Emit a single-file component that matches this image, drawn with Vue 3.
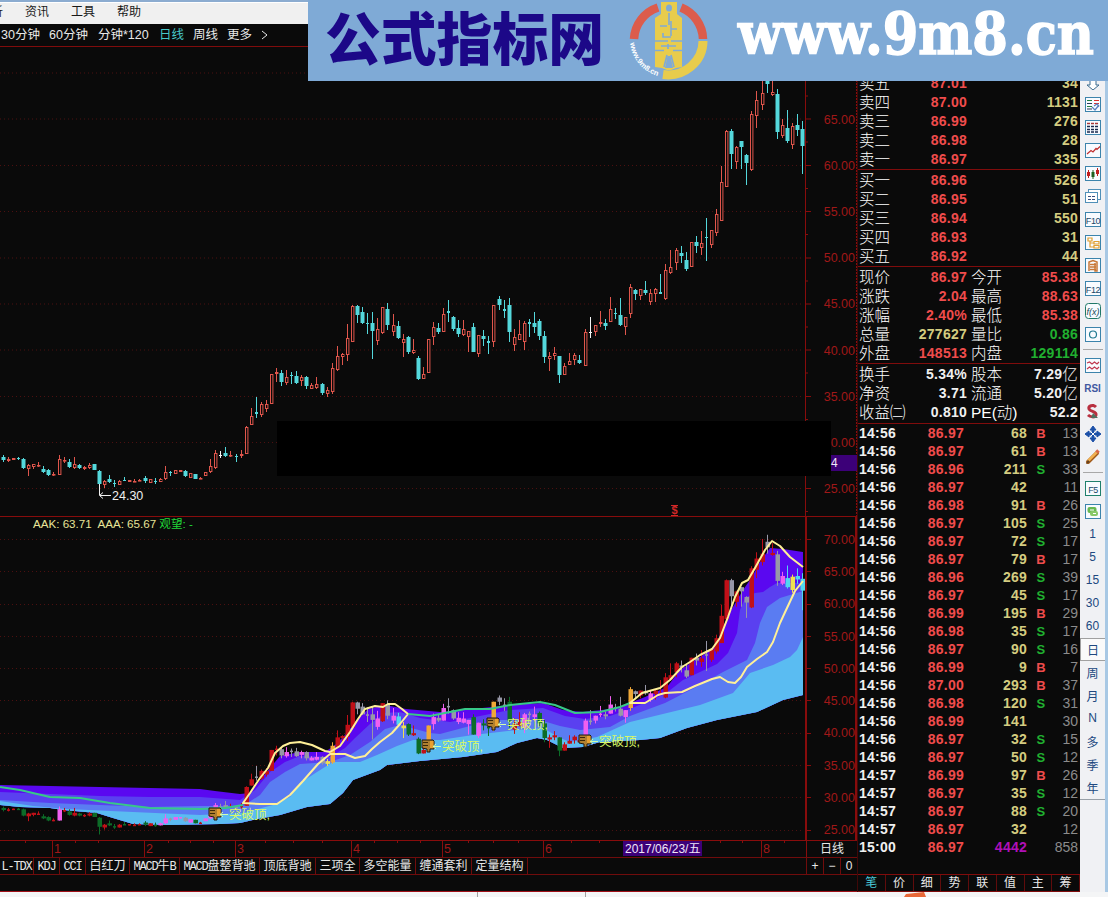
<template>
  <div class="terminal">
    <div class="main-area">
      <div class="menu-bar">
        <span class="menu-cut">析</span>
        <span class="menu-item">资讯</span>
        <span class="menu-item">工具</span>
        <span class="menu-item">帮助</span>
      </div>
      <div class="period-bar">
        <span v-for="p in periods" :key="p.name" :style="{ width: p.w + 'px' }" :class="{ active: p.name === '日线' }">{{ p.name }}</span>
        <svg width="8" height="10" viewBox="0 0 8 10"><path d="M1 1L6 5L1 9" fill="none" stroke="#e8e8e8" /></svg>
      </div>

      <svg class="pane price-pane" width="857" height="469" viewBox="0 47 857 469">
        <g class="grid">
          <line v-for="y in priceGrid" :key="y" x1="0" x2="803" :y1="y" :y2="y" />
        </g>
        <path class="axis" d="M805.5 47V516" />
        <path class="axis dotted" d="M856.5 47V516" />
        <path v-for="y in priceGrid" :key="'t' + y" class="axis" :d="`M806 ${y}h5M806 ${y + 23}h2`" />
        <text v-for="(t, i) in priceLabels" :key="t" class="axis-label" x="855" :y="123.5 + i * 46.2">{{ t }}</text>
        <g v-for="c in candles" :key="c.x">
          <path :d="`M${c.x + 0.5} ${c.hi}V${c.top}M${c.x + 0.5} ${c.bot}V${c.lo}`" :stroke="c.color" />
          <rect v-if="c.kind === 'r'" :x="c.x - 0.5" :y="c.top + 0.5" width="2.4" :height="Math.max(c.bot - c.top - 1, 0.6)" fill="#0a0a0a" :stroke="c.color" />
          <rect v-else :x="c.x - (c.bot - c.top > 2 ? 1.5 : 1)" :y="c.top" :width="c.bot - c.top > 2 ? 4 : 3" :height="Math.max(c.bot - c.top, 1)" :fill="c.color" />
        </g>
        <path d="M99.5 484V495M100 495.5H111M103 492.5L99.5 495.5L103 498.5" fill="none" stroke="#f0f0f0" />
        <text class="low-text" x="112" y="500">24.30</text>
        <rect x="277" y="421" width="554" height="55" fill="#000" />
        <rect x="831" y="455" width="26" height="16" fill="#3c0078" />
        <text x="831" y="467" class="cursor-price">4</text>
        <text x="671.5" y="514" class="dollar">$</text>
        <path d="M671 505.5H678M671 515.5H678" stroke="#d02828" />
      </svg>

      <svg class="pane signal-pane" width="857" height="324" viewBox="0 516 857 324">
        <g class="grid">
          <line v-for="y in signalGrid" :key="y" x1="0" x2="803" :y1="y" :y2="y" />
        </g>
        <polygon v-for="b in bands" :key="b.fill" :points="b.points" :fill="b.fill" />
        <g v-for="c in signals" :key="c.x">
          <path :d="`M${c.x + 0.5} ${c.hi}V${c.lo}`" :stroke="c.color" />
          <rect :x="c.x - (c.h > 2 ? 1.5 : 1)" :y="c.top" :width="c.h > 2 ? 4.5 : 3" :height="c.h" :fill="c.color" />
        </g>
        <polyline v-for="(l, i) in greenLines" :key="'g' + i" :points="l" class="line green" />
        <polyline v-for="(l, i) in yellowLines" :key="'y' + i" :points="l" class="line yellow" />
        <g v-for="m in marks" :key="m.x" :transform="`translate(${m.x} ${m.y})`">
          <path d="M-6 -5H5L6 -4V4H2V7H-1V4L-6 3Z" fill="#b08030" stroke="#20180c" />
          <path d="M-5 -2.5H0M-5 0.5H0" stroke="#3c2808" />
          <rect x="2" y="-4" width="3.5" height="7" fill="#e8a030" />
          <path d="M5 1.5H13M5 1.5L8 -1M5 1.5L8 4" stroke="#d0ffb0" fill="none" />
          <text x="14" y="5.5" class="mark-text">突破顶,</text>
        </g>
        <path class="axis wide" d="M806 516V840" />
        <path class="axis wide" d="M0 516H857" />
        <path class="axis wide" d="M856 516V840" />
        <path v-for="y in signalGrid" :key="'s' + y" class="axis" :d="`M807 ${y}h4`" />
        <text v-for="(t, i) in signalLabels" :key="t" class="axis-label" x="855" :y="543.8 + i * 32.28">{{ t }}</text>
        <text class="legend" x="33" y="528">AAK: 63.71&nbsp; AAA: 65.67 <tspan class="wait">观望: -</tspan></text>
      </svg>

      <div class="time-row">
        <svg width="806" height="17" viewBox="0 840 806 17">
          <path class="axis" d="M0 840.5H806" />
          <g v-for="m in months" :key="m.label">
            <path class="axis" :d="`M${m.x - 0.5} 840V857`" />
            <text class="month" :x="m.x + 1" y="853">{{ m.label }}</text>
          </g>
          <path class="axis" d="M25.5 840v3M75.5 840v3M98.5 840v3M168.5 840v3M190.5 840v3M213.5 840v3M265.5 840v3M293.5 840v3M322.5 840v3M374.5 840v3M397.5 840v3M420.5 840v3M468.5 840v3M493.5 840v3M518.5 840v3M571.5 840v3M599.5 840v3M720.5 840v3M742.5 840v3M784.5 840v3" />
          <rect x="623" y="841" width="79" height="15" fill="#3c0078" />
          <text class="date" x="625" y="853">2017/06/23/五</text>
        </svg>
        <div class="time-unit">日线</div>
      </div>

      <div class="tabs-row">
        <div class="tabs">
          <span v-for="t in tabs" :key="t.w + t.a + t.b" class="tab" :style="{ width: t.w + 'px' }"><i>{{ t.a }}</i>{{ t.b }}<i>{{ t.c }}</i></span>
        </div>
        <div class="zoomers"><span>+</span><span>−</span><span>0</span></div>
      </div>
      <div class="blank-row"></div>
    </div>

    <div class="quote">
      <div class="rows asks">
        <div v-for="r in asks" :key="r[0]" class="row"><label>{{ r[0] }}</label><b class="price red">{{ r[1] }}</b><b class="vol yel">{{ r[2] }}</b></div>
      </div>
      <div class="rows bids">
        <div v-for="r in bids" :key="r[0]" class="row"><label>{{ r[0] }}</label><b class="price red">{{ r[1] }}</b><b class="vol yel">{{ r[2] }}</b></div>
      </div>
      <div class="rows stats">
        <div v-for="r in stats" :key="r[0]" class="row">
          <label>{{ r[0] }}</label><b class="price" :class="r[2]">{{ r[1] }}</b>
          <label class="second">{{ r[3] }}</label><b class="vol" :class="r[5]">{{ r[4] }}</b>
        </div>
      </div>
      <div class="rows funds">
        <div v-for="r in funds" :key="r[0]" class="row">
          <label>{{ r[0] }}</label><b class="price wht">{{ r[1] }}</b>
          <label class="second">{{ r[2] }}</label><b class="vol wht">{{ r[3] }}<em v-if="r[4]">{{ r[4] }}</em></b>
        </div>
      </div>
      <div class="ticks">
        <div v-for="(t, i) in ticks" :key="i" class="tick">
          <b class="time wht">{{ t[0] }}</b>
          <b class="tprice red">{{ t[1] }}</b>
          <b class="tvol" :class="i === ticks.length - 1 ? 'mag' : 'yel'">{{ t[2] }}</b>
          <b class="side" :class="t[3] === 'B' ? 'red' : 'grn'">{{ t[3] }}</b>
          <span class="count">{{ t[4] }}</span>
        </div>
      </div>
      <div class="quote-tabs">
        <span v-for="(t, i) in quoteTabs" :key="t" :class="{ active: i === 0 }">{{ t }}</span>
      </div>
    </div>

    <div class="tool-bar">
      <div v-for="(t, i) in tools" :key="i" class="tool" :class="{ gap: t === '|', text: !isIcon(t) && t !== '|', on: t === '日' }">
        <svg v-if="isIcon(t)" width="18" height="18" viewBox="0 0 18 18" fill="none">
          <template v-if="t === '@down'">
            <path d="M6 4V13H3L9 18L15 13H12V4" fill="#fff" stroke="#3c6c90" />
          </template>
          <template v-else-if="t === '@move'">
            <path d="M9 1L12 5H10V8H13V6L17 9L13 12V10H10V13H12L9 17L6 13H8V10H5V12L1 9L5 6V8H8V5H6Z" fill="#1c50a8" stroke="#1c50a8" />
            <path d="M7 7L11 11M11 7L7 11" stroke="#fff" />
          </template>
          <template v-else-if="t === '@pen'">
            <path d="M4 14L13 5" stroke="#a05818" stroke-width="4" stroke-linecap="round" />
            <path d="M4 13L13 4" stroke="#f0b050" stroke-width="2.5" />
            <path d="M12.5 4.5L14.5 2.5" stroke="#d86848" stroke-width="3.5" />
            <path d="M2 16L4 12L6 14Z" fill="#604020" />
          </template>
          <template v-else-if="t === '@s'">
            <path d="M12 5C9 2 4 4 5 7C6 10 13 9 12 13C11 16 6 15 4 13" stroke="#b83040" stroke-width="3" />
            <path d="M9 2V4" stroke="#b83040" stroke-width="2" />
            <path d="M9 11L14 16H7" fill="#507060" />
          </template>
          <template v-else>
            <rect v-if="t !== '@pages' && t !== '@fx'" x="1.5" y="2.5" width="15" height="14" fill="#f8fbff" :stroke="t === '@F5' ? '#20806c' : '#3c84ac'" />
            <template v-if="t === '@news'">
              <path d="M3 5.5H8M3 11.5H8" stroke="#208040" /><path d="M3 8.5H8M3 14H8" stroke="#283858" /><path d="M10 5.5H15M10 8.5H15" stroke="#d83030" />
              <path d="M8 12L11 15L15 10M10 11L13 9L15 12" stroke="#5880c0" stroke-width="1.3" />
            </template>
            <template v-if="t === '@list'">
              <path d="M3 5.5H15" stroke="#a83838" stroke-width="1.5" stroke-dasharray="3 1" /><path d="M3 8.5H15M3 11.5H15M3 14H15" stroke="#18284c" stroke-width="1.5" stroke-dasharray="3 1" />
            </template>
            <path v-if="t === '@trend'" d="M3 13L7 9.5L9 11L12 7.5L13 8.5L16 5.5" stroke="#c03030" stroke-width="1.2" />
            <template v-if="t === '@kline'">
              <path d="M4.5 6V14M13.5 4V12" stroke="#c02020" /><path d="M4.5 8V12M13.5 6V10" stroke="#c02020" stroke-width="3" /><path d="M9 6V15" stroke="#206020" /><path d="M9 8V13" stroke="#206020" stroke-width="3" />
            </template>
            <template v-if="t === '@pages'">
              <rect x="4.5" y="2.5" width="12" height="10" fill="#fff" stroke="#5090b8" /><rect x="1.5" y="5.5" width="12" height="10" fill="#fff" stroke="#5090b8" /><path d="M4 9.5H12M4 12.5H12" stroke="#385080" stroke-dasharray="3 1" />
            </template>
            <path v-if="t === '@tree'" d="M4 5H8V8H4ZM6 8V14H10M6 10H10M10 8.5H15V11H10ZM10 12.5H15V15H10Z" stroke="#e0a030" stroke-width="1.2" />
            <path v-if="t === '@note'" d="M5 15V6L9 4.5L13 6V15H11V7M6 8.5H12M6 11H12M6 13.5H12" stroke="#c87838" stroke-width="1.5" />
            <template v-if="t === '@fx'">
              <rect x="1.5" y="1.5" width="15" height="15" rx="3" fill="#f8fbff" stroke="#207868" />
              <text x="9" y="12.5" class="fx">f(x)</text>
            </template>
            <circle v-if="t === '@ring'" cx="9" cy="9.5" r="3.5" stroke="#207890" stroke-width="1.2" />
            <path v-if="t === '@wave'" d="M3 7L5.5 6L8 8L10.5 6L13 8L15 6M3 13L5.5 11L8 13L10.5 11L13 13L15 11" stroke="#c03850" stroke-width="1.2" />
            <template v-if="t === '@phone'">
              <rect x="3.5" y="5" width="9" height="6" rx="2" fill="#68b850" /><rect x="6" y="9" width="8" height="5" rx="2" fill="#88c868" /><path d="M6 8H10M9 11.5H12" stroke="#fff" />
            </template>
            <text v-if="t[1] === 'F'" x="9" y="13.5" class="f-key">{{ t.slice(1) }}</text>
          </template>
        </svg>
        <span v-else-if="t !== '|'" :class="{ rsi: t === 'RSI' }">{{ t }}</span>
      </div>
      <div class="tool-rest"></div>
    </div>

    <div class="status-strip">
      <i></i><i></i>
      <svg width="26" height="5" viewBox="0 0 26 5"><path d="M2 5L4 2L22 0L24 5Z" fill="#e86838" /></svg>
    </div>

    <div class="banner">
      <svg width="800" height="81" viewBox="308 0 800 81">
        <text class="site-name" x="325" y="60" textLength="279" lengthAdjust="spacingAndGlyphs">公式指标网</text>
        <path d="M634 39A35 35 0 0 1 658 7.5M681 7.5A35 35 0 0 1 703 39" fill="none" stroke="#dc5c4c" stroke-width="8.5" />
        <path d="M703 41A35 34 0 0 1 663 74.5" fill="none" stroke="#e8cc4c" stroke-width="9" />
        <path d="M661 2H677V14L682 18V67L676 68L671 70H667L662 68L655 67V18L661 14Z" fill="#e8cc4c" />
        <ellipse cx="669" cy="8" rx="3" ry="3.5" fill="#7faad6" />
        <path d="M669 13V25M660 26H667M671 21V36M671 29H677M663 33V37H671M655 41H668M671 41H682M668 44V49M655 50.5H664M673 50.5H682M661 46H676M667 55L664 67M671 55L674 67" fill="none" stroke="#7faad6" stroke-width="1.6" />
        <path d="M667.5 56H670.5L673 68H665Z" fill="#7faad6" />
        <path id="logo-arc" d="M630 43A39 39 0 0 0 662 77" fill="none" />
        <text class="logo-url"><textPath href="#logo-arc">www.9m8.cn</textPath></text>
        <text class="site-url" x="738" y="54" textLength="356" lengthAdjust="spacingAndGlyphs">www.9m8.cn</text>
      </svg>
    </div>
  </div>
</template>

<script setup>
const periods = [
  { name: '30分钟', w: 48 },
  { name: '60分钟', w: 49 },
  { name: '分钟*120', w: 61 },
  { name: '日线', w: 34 },
  { name: '周线', w: 34 },
  { name: '更多', w: 34 }
]

// x, 最高, 实体上沿, 实体下沿, 最低, 主图颜色, 副图颜色
const raw = `3 455 457 460 462 c g
8 457 459 461 462 r d
13 458 458 460 460 r d
18 457 458 459 460 c g
23 458 459 468 469 c g
28 464 465 469 476 r d
33 464 464 467 469 r d
38 462 465 466 467 r d
43 466 469 472 473 c g
48 469 470 475 476 c g
53 472 474 475 476 r d
59 455 459 475 475 r m
64 457 460 461 463 r d
69 459 462 467 468 c g
74 457 464 468 469 r d
79 464 465 468 469 c g
84 466 467 469 470 r d
89 463 465 468 469 r d
94 464 464 470 470 c g
99 470 471 484 495 c g
104 480 481 485 488 r d
109 475 479 482 483 c g
114 480 483 484 487 c g
119 480 481 485 485 r d
124 477 480 481 481 c g
129 480 480 482 482 r d
134 479 481 482 482 r d
139 479 480 481 481 r d
145 476 478 481 483 c g
150 479 479 483 483 r d
155 478 481 482 484 c g
160 478 479 482 482 r m
165 466 472 479 480 r m
170 471 472 473 476 c s
175 470 470 474 474 r m
180 470 470 472 472 r m
185 470 471 476 477 c s
190 473 473 478 478 r m
195 474 474 479 479 c g
200 477 478 479 479 r d
205 472 472 476 476 r m
210 459 466 472 473 r m
215 450 453 468 469 r m
220 451 455 456 458 w s
225 447 453 456 457 c s
230 451 455 456 457 r d
236 454 456 457 462 c s
241 450 454 456 458 r d
246 426 427 454 454 r d
251 408 416 425 425 r d
256 397 412 414 418 c s
261 402 404 415 417 r d
266 400 404 409 412 r d
271 374 374 404 404 r d
276 368 372 374 382 r d
281 370 373 382 386 c s
286 370 377 383 385 r m
291 372 375 376 384 c s
296 371 376 383 384 c s
301 375 377 381 386 r m
306 376 377 386 389 c s
311 383 385 389 389 r m
316 377 384 388 389 r m
322 383 384 393 395 c s
327 387 390 394 397 r y
332 363 368 392 394 r o
337 346 356 370 371 r d
342 353 354 357 365 r d
347 324 338 355 361 r d
352 305 306 342 342 r d
357 305 306 315 323 c s
362 307 312 323 324 c s
367 313 323 324 334 c s
372 312 323 331 359 c s
377 318 329 341 345 r m
382 307 307 333 334 r d
387 303 309 325 330 c s
393 314 325 332 336 r m
398 321 326 338 339 c b
403 334 339 343 357 r y
408 336 337 352 354 c g
413 339 350 353 354 r d
418 356 358 379 380 c g
423 367 374 379 379 r d
428 339 339 373 373 r o
433 322 327 337 345 r m
438 323 328 332 334 c s
443 308 314 332 332 r m
448 300 311 313 322 c s
453 316 317 329 331 c s
458 320 328 334 337 c m
463 320 329 335 336 r m
468 331 331 337 352 r m
473 323 327 352 352 c g
478 335 335 354 357 r m
483 330 336 339 346 c g
488 336 341 343 354 c g
493 305 305 342 347 r o
499 296 299 305 310 c s
504 300 309 311 318 c s
509 298 305 332 342 c g
514 329 337 345 351 r d
519 320 334 340 340 r d
524 321 323 342 350 r m
529 319 322 324 337 c s
534 312 323 327 333 c m
539 319 321 336 340 c g
544 331 336 357 363 c g
549 352 356 359 371 r d
554 347 353 356 360 r d
559 356 356 375 383 c g
564 363 366 375 375 r d
569 353 361 365 365 r d
574 353 355 360 365 r d
579 355 360 363 364 c d
585 329 332 366 366 r m
590 317 332 333 338 w s
595 325 325 332 336 r m
600 311 322 324 327 r m
605 319 323 326 330 c s
610 297 309 322 322 r m
615 308 313 314 319 c s
620 298 315 325 326 c s
625 317 317 327 335 r m
630 284 287 314 318 r o
635 289 290 294 300 c s
640 289 289 296 300 r d
645 281 290 293 295 c s
650 289 293 302 305 r m
655 288 289 294 302 r d
660 274 292 294 294 c d
665 264 270 299 300 r d
670 250 267 273 274 r d
676 248 250 263 270 r d
681 246 253 256 263 c s
686 252 260 269 271 c s
691 242 242 267 267 r d
696 236 242 246 253 c s
701 231 243 248 255 r d
706 218 237 238 261 c s
711 230 230 245 248 r d
716 209 214 233 236 r d
721 166 182 221 221 r d
726 130 131 187 187 r d
731 129 131 154 169 c s
736 146 147 162 169 r d
741 141 141 147 169 c s
746 154 155 163 185 c s
751 111 114 170 171 r d
756 91 100 116 128 r d
762 72 93 105 110 r d
767 66 76 84 93 c s
772 78 92 95 96 r d
777 89 94 132 139 c s
782 119 125 136 138 r m
787 110 128 141 143 c b
792 123 126 145 149 r y
797 114 125 130 136 c b
802 121 129 146 174 c b`

const mainColors = { c: '#54d8dc', r: '#e0564c', w: '#f4f4f4' }
const signalColors = { g: '#0c6c28', d: '#c01018', m: '#f060f0', s: '#9898a8', y: '#f0e050', o: '#f0a838', b: '#50d8f0' }

const rows = raw.split('\n').map(l => l.split(' '))

const candles = rows.map(([x, hi, top, bot, lo, kind]) => ({
  x: +x, hi: +hi, top: +top, bot: +bot, lo: +lo, kind, color: mainColors[kind]
}))

// 主图纵坐标换算到副图
const toSignal = y => 571.8 + (y - 119) * 0.6986

const signals = rows.map(([x, hi, top, bot, lo, , s]) => ({
  x: +x,
  hi: toSignal(+hi),
  lo: toSignal(+lo),
  top: toSignal(+top),
  h: Math.max(toSignal(+bot) - toSignal(+top), 1.5),
  color: signalColors[s]
}))

const priceGrid = [73, 119, 165.5, 211.5, 258, 304, 350, 396.5, 442.5, 488.5]
const priceLabels = ['65.00', '60.00', '55.00', '50.00', '45.00', '40.00', '35.00', '30.00', '25.00']
const signalLabels = ['70.00', '65.00', '60.00', '55.00', '50.00', '45.00', '40.00', '35.00', '30.00', '25.00']
const signalGrid = signalLabels.map((_, i) => Math.round(539 + i * 32.28) + 0.5)

const bottom = '803,695 783,700 757,712 717,720 687,728 660,738 640,740 600,742 583,747 563,748 547,740 537,738 517,743 497,752 463,757 420,761 387,765 380,770 353,780 343,793 330,804 307,807 280,815 257,819 240,823 220,824 167,825 133,824 113,818 97,813 63,810 50,808 20,807 0,805'
const bands = [
  { fill: '#5a08f0', points: '0,785 50,786 100,787 150,788 200,789 215,791 240,794 250,793 265,774 280,756 300,752 325,752 335,745 345,735 355,722 368,709 385,705 406,709 440,712 473,709 510,705 543,703 563,710 583,712 620,708 630,703 645,697 667,687 680,670 700,657 715,647 723,627 730,612 743,590 752,577 760,562 770,548 783,549 803,552 ' + bottom },
  { fill: '#5a40f0', points: '0,792 50,794 100,796 150,797 200,797 240,800 255,790 270,772 285,762 300,756 330,757 345,748 355,738 370,724 385,713 400,712 420,718 450,722 480,716 510,710 543,708 565,716 585,719 610,716 630,709 665,694 683,680 717,664 728,653 737,633 740,610 745,598 755,593 763,592 770,587 777,583 803,583 ' + bottom },
  { fill: '#5a7cf2', points: '0,800 50,803 100,805 150,807 200,806 243,806 260,795 270,782 285,772 300,764 330,762 350,755 370,742 385,729 400,725 430,733 440,734 470,726 500,720 540,720 560,726 580,730 610,727 630,716 665,703 700,685 723,672 747,660 755,643 760,623 767,607 780,598 803,591 ' + bottom },
  { fill: '#5abcf2', points: '0,801 33,806 67,809 133,812 200,815 243,813 273,805 290,797 300,783 317,772 333,762 360,762 377,755 397,746 413,740 440,740 473,735 517,730 543,728 560,738 570,742 597,737 630,722 667,713 700,705 733,693 750,673 773,665 790,657 797,650 803,637 ' + bottom }
]

const greenLines = [
  '0,787 20,790 50,797 80,798 110,803 150,808 200,809 225,808 243,805',
  '408,714 430,716 445,713 465,709 490,709 510,705 540,702 555,705 575,713 600,712 620,707 630,703'
]
const yellowLines = [
  '408,714 402,709 395,704 388,704 383,707 375,706 365,709 358,719 350,732 340,746 330,752 325,751 312,745 300,742 290,743 283,746 275,753 268,768 260,778 250,793 243,803 260,804 277,804 290,795 303,781 318,764 330,754 345,754 355,758 365,756 372,749 380,742 392,733 400,724 408,714',
  '803,567 790,557 780,546 772,541 765,550 755,568 748,580 742,583 735,597 728,617 720,638 712,649 700,655 690,662 682,667 670,680 660,688 642,693 630,703 645,703 658,695 665,693 682,692 695,686 712,679 720,677 728,682 735,683 741,677 747,667 757,659 767,652 773,642 780,623 787,608 795,591 803,581'
]

const marks = [
  { x: 215, y: 813 },
  { x: 428, y: 745 },
  { x: 493, y: 723 },
  { x: 585, y: 740 }
]

const months = [
  { x: 53, label: '1' },
  { x: 145, label: '2' },
  { x: 236, label: '3' },
  { x: 352, label: '4' },
  { x: 443, label: '5' },
  { x: 544, label: '6' },
  { x: 762, label: '8' }
]

const tabs = [
  { w: 34, a: 'L-TDX' },
  { w: 26, a: 'KDJ' },
  { w: 26, a: 'CCI' },
  { w: 44, b: '白红刀' },
  { w: 50, a: 'MACD', b: '牛', c: 'B' },
  { w: 80, a: 'MACD', b: '盘整背驰' },
  { w: 56, b: '顶底背驰' },
  { w: 44, b: '三项全' },
  { w: 56, b: '多空能量' },
  { w: 56, b: '缠通套利' },
  { w: 56, b: '定量结构' }
]

const asks = [
  ['卖五', '87.01', 34],
  ['卖四', '87.00', 1131],
  ['卖三', '86.99', 276],
  ['卖二', '86.98', 28],
  ['卖一', '86.97', 335]
]
const bids = [
  ['买一', '86.96', 526],
  ['买二', '86.95', 51],
  ['买三', '86.94', 550],
  ['买四', '86.93', 31],
  ['买五', '86.92', 44]
]
const stats = [
  ['现价', '86.97', 'red', '今开', '85.38', 'red'],
  ['涨跌', '2.04', 'red', '最高', '88.63', 'red'],
  ['涨幅', '2.40%', 'red', '最低', '85.38', 'red'],
  ['总量', '277627', 'yel', '量比', '0.86', 'grn'],
  ['外盘', '148513', 'red', '内盘', '129114', 'grn']
]
const funds = [
  ['换手', '5.34%', '股本', '7.29', '亿'],
  ['净资', '3.71', '流通', '5.20', '亿'],
  ['收益㈡', '0.810', 'PE(动)', '52.2', '']
]

const ticks = [
  ['14:56', '86.97', 68, 'B', 13],
  ['14:56', '86.97', 61, 'B', 13],
  ['14:56', '86.96', 211, 'S', 33],
  ['14:56', '86.97', 42, '', 11],
  ['14:56', '86.98', 91, 'B', 26],
  ['14:56', '86.97', 105, 'S', 25],
  ['14:56', '86.97', 72, 'S', 17],
  ['14:56', '86.97', 79, 'B', 17],
  ['14:56', '86.96', 269, 'S', 39],
  ['14:56', '86.97', 45, 'S', 17],
  ['14:56', '86.99', 195, 'B', 29],
  ['14:56', '86.98', 35, 'S', 17],
  ['14:56', '86.97', 90, 'S', 16],
  ['14:56', '86.99', 9, 'B', 7],
  ['14:56', '87.00', 293, 'B', 37],
  ['14:56', '86.98', 120, 'S', 31],
  ['14:56', '86.99', 141, '', 30],
  ['14:56', '86.97', 32, 'S', 15],
  ['14:56', '86.97', 50, 'S', 12],
  ['14:57', '86.99', 97, 'B', 26],
  ['14:57', '86.97', 35, 'S', 12],
  ['14:57', '86.97', 88, 'S', 20],
  ['14:57', '86.97', 32, '', 12],
  ['15:00', '86.97', 4442, '', 858]
]

const quoteTabs = ['笔', '价', '细', '势', '联', '值', '主', '筹']

const tools = [
  '@down', '@news', '@list', '@trend', '@kline', '@pages', '@F10', '@tree', '@note', '@F12', '@fx', '@ring',
  '|', '@wave', 'RSI', '@s', '@move', '@pen',
  '|', '@F5', '@phone', '1', '5', '15', '30', '60', '日', '周', '月', 'N', '多', '季', '年'
]
const isIcon = t => t[0] === '@'
</script>

<style>
body {
  margin: 0;
  overflow: hidden;
}
</style>

<style scoped>
.terminal {
  position: relative;
  display: grid;
  grid-template-columns: 857px 223px 28px;
  grid-template-rows: 892px 5px;
  width: 1108px;
  height: 897px;
  background: #0a0a0a;
  font-family: "Liberation Sans", "Noto Sans CJK SC", sans-serif;
  font-size: 12px;
  color: #e8e8e8;
  overflow: hidden;
}

.main-area {
  display: flex;
  flex-direction: column;
}

.menu-bar {
  display: flex;
  align-items: center;
  height: 24px;
  box-sizing: border-box;
  border-top: 2px solid #8cacd0;
  background: #f0f0f0;
  box-shadow: inset 0 1px 0 #fff;
  color: #181818;
  line-height: 18px;
  overflow: hidden;
}

.menu-bar span {
  margin-top: -2px;
}

.menu-cut {
  width: 25px;
  text-indent: -9px;
}

.menu-item {
  width: 46px;
}

.period-bar {
  display: flex;
  align-items: center;
  height: 22px;
  padding-left: 1px;
  border-bottom: 1px solid #800c0c;
  font-size: 12.5px;
  line-height: 20px;
  white-space: nowrap;
}

.period-bar .active {
  color: #48c8c8;
}

.pane {
  display: block;
  flex: none;
}

.grid line {
  stroke: #4c1010;
  stroke-dasharray: 1 3;
}

.axis {
  fill: none;
  stroke: #880c0c;
}

.axis.wide {
  stroke-width: 2;
}

.axis.dotted {
  stroke-dasharray: 2 1;
}

.axis-label {
  fill: #a01818;
  font-size: 12.5px;
  text-anchor: end;
}

.low-text {
  fill: #f0f0f0;
  font-size: 12.5px;
}

.cursor-price,
.date {
  fill: #f0e8f8;
  font-size: 12px;
}

.dollar {
  fill: #d02828;
  font-size: 11px;
  font-weight: bold;
}

.line {
  fill: none;
  stroke-width: 2;
  stroke-linejoin: round;
}

.line.green {
  stroke: #38c888;
}

.line.yellow {
  stroke: #fff098;
}

.mark-text {
  fill: #d8f868;
  font-size: 12.5px;
}

.legend {
  fill: #e8e498;
  font-size: 11.6px;
}

.wait {
  fill: #20d838;
}

.time-row {
  display: flex;
  height: 17px;
}

.time-unit {
  width: 50px;
  border: 1px solid #880c0c;
  border-width: 1px 0 0 1px;
  line-height: 16px;
  text-align: center;
}

.month {
  fill: #a01818;
  font-size: 12.5px;
}

.tabs-row {
  display: flex;
  justify-content: space-between;
  height: 16px;
  border: 1px solid #700c0c;
  border-width: 1px 0;
  line-height: 16px;
}

.tabs,
.zoomers {
  display: flex;
}

.tab {
  box-sizing: border-box;
  border-right: 1px solid #700c0c;
  text-align: center;
  white-space: nowrap;
}

.tab i {
  font-family: "Liberation Mono", monospace;
  font-style: normal;
  letter-spacing: -1.2px;
}

.zoomers {
  width: 51px;
}

.zoomers span {
  flex: 1;
  border-left: 1px solid #700c0c;
  text-align: center;
}

.blank-row {
  flex: 1;
  border-bottom: 1px solid #a01018;
}

.quote {
  display: flex;
  flex-direction: column;
  padding-top: 73px;
  box-sizing: border-box;
  height: 892px;
  border-left: 1px solid #400808;
}

.rows {
  box-sizing: border-box;
  padding-top: 1px;
  border-bottom: 1px solid #800c0c;
}

.asks,
.bids,
.stats {
  height: 97px;
}

.funds {
  height: 60px;
}

.row {
  display: flex;
  align-items: center;
  height: 19px;
  padding: 0 2px 0 1px;
  line-height: 19px;
  white-space: nowrap;
}

.row label {
  width: 50px;
  font-size: 15.5px;
  font-weight: 300;
  color: #fff;
}

.row .second {
  width: 44px;
  margin-left: 4px;
}

b {
  font-size: 14px;
  letter-spacing: 0.25px;
}

.price {
  width: 58px;
  text-align: right;
}

.vol {
  display: flex;
  flex: 1;
  align-items: center;
  justify-content: flex-end;
}

.vol em {
  font-style: normal;
  font-weight: 300;
  font-size: 15.5px;
}

.red {
  color: #f04c4c;
}

.yel {
  color: #d4cc80;
}

.grn {
  color: #20b030;
}

.wht {
  color: #f0f0f0;
}

.mag {
  color: #b010b8;
}

.ticks {
  flex: 1;
}

.tick {
  display: flex;
  align-items: center;
  height: 18px;
  padding: 0 2px 0 1px;
}

.time {
  width: 44px;
}

.tprice {
  width: 61px;
  text-align: right;
}

.tvol {
  width: 63px;
  text-align: right;
}

.tick .side {
  width: 18px;
  margin-left: 5px;
  text-align: center;
  font-size: 13px;
}

.count {
  flex: 1;
  color: #8c8c8c;
  font-size: 14px;
  text-align: right;
}

.quote-tabs {
  display: flex;
  height: 16px;
  border: 1px solid #800c0c;
  border-width: 1px 0;
  line-height: 17px;
}

.quote-tabs span {
  flex: 1;
  border-right: 1px solid #600c0c;
  text-align: center;
}

.quote-tabs .active {
  color: #48c8d8;
}

.tool-bar {
  display: flex;
  flex-direction: column;
  height: 892px;
  padding-top: 69.5px;
  box-sizing: border-box;
  border-right: 3px solid #a8c8e4;
  background: #f0f1f4;
}

.tool {
  display: flex;
  flex: none;
  align-items: center;
  justify-content: center;
  height: 23px;
  color: #204880;
}

.tool.gap {
  height: 8px;
  background: linear-gradient(#a8a8a8, #a8a8a8) center 3px / 20px 1px no-repeat;
}

.tool.text {
  font-size: 12px;
}

.tool.on {
  box-sizing: border-box;
  border: 1px solid #a0a0a0;
  border-right: 0;
  background: #fafafa;
}

.tool-rest {
  border-top: 1px solid #98a0a8;
}

.rsi {
  font-size: 10px;
  font-weight: bold;
  color: #4058a0;
}

.f-key {
  fill: #184868;
  font-size: 9px;
  letter-spacing: -0.4px;
  text-anchor: middle;
}

.fx {
  fill: #184c58;
  font-size: 9px;
  font-style: italic;
  text-anchor: middle;
}

.status-strip {
  display: flex;
  grid-column: 1 / 4;
  background: #f4f5f6;
}

.status-strip i {
  width: 1px;
  margin-left: 477px;
  background: #a0a0a0;
}

.status-strip i + i {
  margin-left: 107px;
}

.status-strip svg {
  margin-left: 316px;
}

.banner {
  position: absolute;
  top: 0;
  left: 308px;
  width: 800px;
  height: 81px;
  background: #7faad6;
}

.banner svg {
  display: block;
  overflow: visible;
}

.site-name {
  fill: #1c0888;
  font-family: "Noto Sans CJK SC", sans-serif;
  font-size: 57px;
  font-weight: 900;
}

.site-url {
  fill: #fff;
  stroke: #fff;
  stroke-width: 1.5px;
  font-family: "DejaVu Serif", serif;
  font-size: 58px;
  font-weight: bold;
}

.logo-url {
  fill: #fff;
  font-size: 7.5px;
  font-weight: bold;
}
</style>
